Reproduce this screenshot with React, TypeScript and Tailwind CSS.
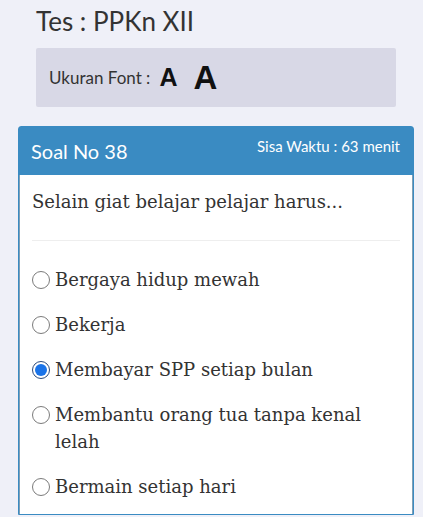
import { useState } from "react";

const options = [
  "Bergaya hidup mewah",
  "Bekerja",
  "Membayar SPP setiap bulan",
  "Membantu orang tua tanpa kenal lelah",
  "Bermain setiap hari",
];

function Radio({ checked }: { checked: boolean }) {
  return (
    <span
      className={
        checked
          ? "mt-[5px] flex h-[18px] w-[18px] shrink-0 items-center justify-center rounded-full border border-[#2c4a7a] bg-white"
          : "mt-[5px] flex h-[18px] w-[18px] shrink-0 items-center justify-center rounded-full border border-[#7b7b7b] bg-white"
      }
    >
      {checked && <span className="h-[12px] w-[12px] rounded-full bg-[#1a73e8]" />}
    </span>
  );
}

export default function App() {
  const [answer, setAnswer] = useState(2);

  return (
    <div className="min-h-[517px] bg-[#eff0f8] font-['Lato','Noto_Sans',sans-serif]">
      <div className="pl-[36px] pr-[27px] pt-[4px]">
        <h1 className="text-[26px] leading-[34px] text-[#333333]">Tes : PPKn XII</h1>
        <div className="mt-[10px] flex h-[59px] items-center rounded-[2px] bg-[#d8d8e6] px-[13px]">
          <span className="text-[17px] text-[#333333]">Ukuran Font :</span>
          <button className="ml-[9px] font-['Liberation_Sans',sans-serif] text-[25px] font-bold leading-none text-[#111111]">
            A
          </button>
          <button className="ml-[16px] font-['Liberation_Sans',sans-serif] text-[33px] font-bold leading-none text-[#111111]">
            A
          </button>
        </div>
      </div>

      <div className="ml-[18px] mr-[9px] mt-[19px] rounded-t-[3px] border border-[#3a8bc2] bg-white">
        <div className="flex h-[48px] items-start justify-between bg-[#3a8bc2] pl-[12px] pr-[13px] text-white">
          <span className="mt-[11px] text-[20px] leading-[26px]">Soal No 38</span>
          <span className="mt-[9px] text-[15px] leading-[20px]">Sisa Waktu : 63 menit</span>
        </div>
        <div className="border-x border-[#7f9fb6] px-[12px] pb-[14px] font-['DejaVu_Serif',serif] text-[#333333]">
          <p className="pt-[13px] text-[18px] leading-[27px]">Selain giat belajar pelajar harus...</p>
          <hr className="mt-[25px] border-[#eeeeee]" />
          <div className="mt-[25px] flex flex-col gap-[18px]">
            {options.map((opt, i) => (
              <label
                key={opt}
                className="flex cursor-pointer items-start gap-[5px] text-[18px] leading-[27px]"
                onClick={() => setAnswer(i)}
              >
                <Radio checked={answer === i} />
                <span>{opt}</span>
              </label>
            ))}
          </div>
        </div>
      </div>
    </div>
  );
}
